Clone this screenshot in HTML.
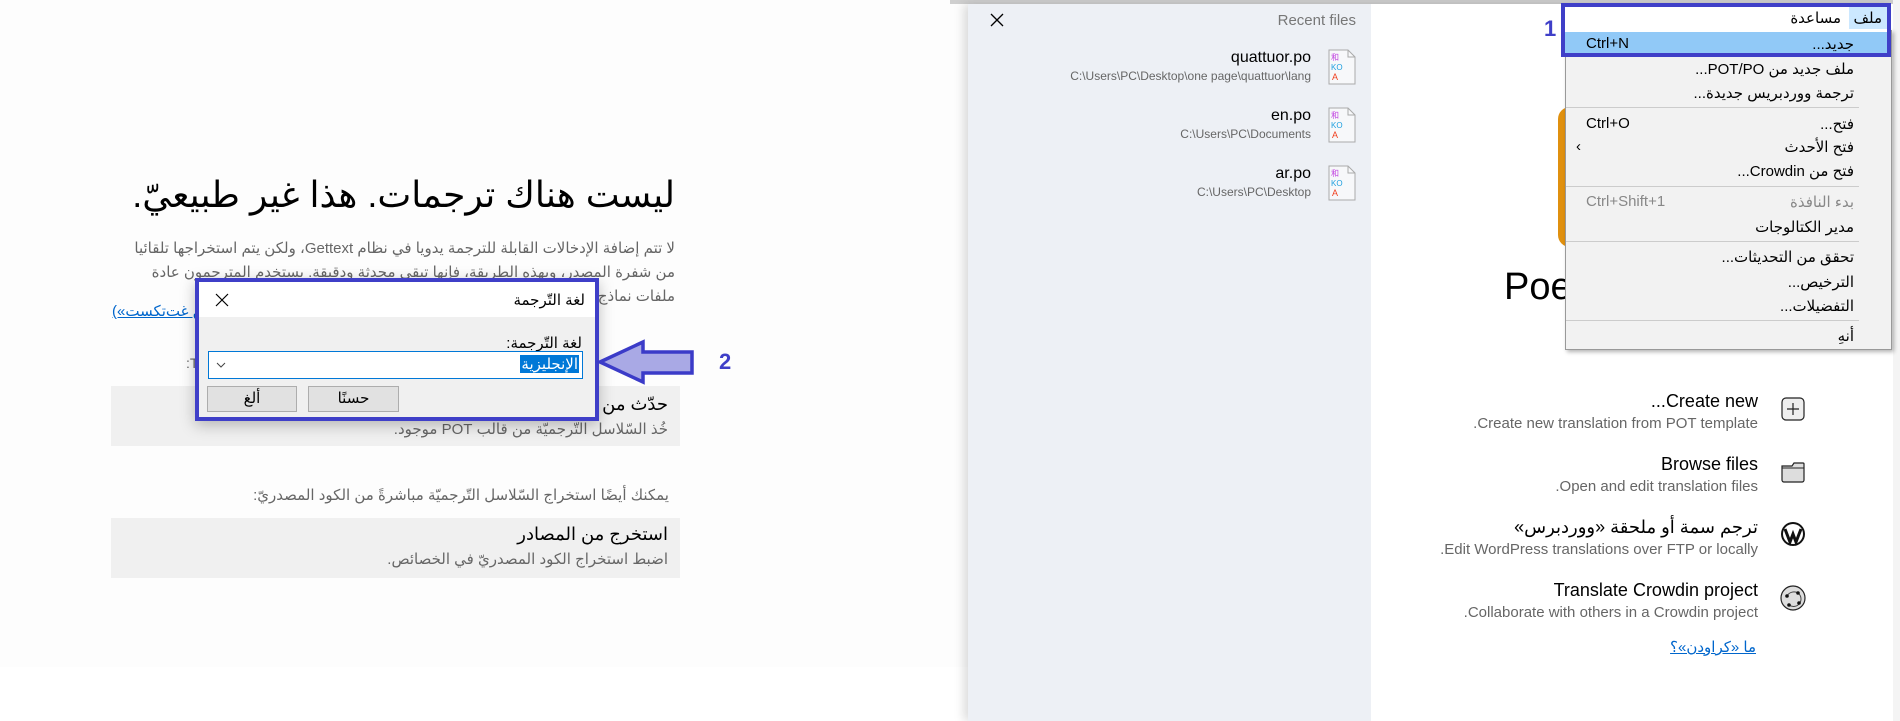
<!DOCTYPE html>
<html><head><meta charset="utf-8">
<style>
*{margin:0;padding:0;box-sizing:border-box}
body{width:1900px;height:721px;position:relative;overflow:hidden;background:#fff;font-family:"Liberation Sans","DejaVu Sans",sans-serif;color:#000}
.a{position:absolute;white-space:nowrap}
.r{direction:rtl}
</style></head><body>
<!-- left panel -->
<div class="a" style="left:0;top:0;width:968px;height:667px;background:#fdfdfd"></div>
<div class="a r" style="right:1225px;top:174px;font-size:36px;">ليست هناك ترجمات. هذا غير طبيعيّ.</div>
<div class="a r" style="right:1225px;top:237px;font-size:15px;color:#666;line-height:24px;text-align:right">لا تتم إضافة الإدخالات القابلة للترجمة يدويا في نظام Gettext، ولكن يتم استخراجها تلقائيا<br>من شفرة المصدر، وبهذه الطريقة، فإنها تبقى محدثة ودقيقة. يستخدم المترجمون عادة<br>ملفات نماذج POT</div>
<div class="a r" style="left:112px;top:302px;font-size:15px;color:#0066cc;text-decoration:underline">(«عن غت‌تكست»)</div>
<div class="a" style="left:186px;top:355px;font-size:14px;color:#666">:T</div>
<div class="a" style="left:111px;top:386px;width:569px;height:60px;background:#f0f0f0"></div>
<div class="a r" style="right:1232px;top:394px;font-size:18px">حدّث من قالب POT</div>
<div class="a r" style="right:1232px;top:420px;font-size:15px;color:#666">خُذ السّلاسل التّرجميّة من قالب POT موجود.</div>
<div class="a r" style="right:1231px;top:486px;font-size:15px;color:#666">يمكنك أيضًا استخراج السّلاسل التّرجميّة مباشرةً من الكود المصدريّ:</div>
<div class="a" style="left:111px;top:518px;width:569px;height:60px;background:#f0f0f0"></div>
<div class="a r" style="right:1232px;top:524px;font-size:18px">استخرج من المصادر</div>
<div class="a r" style="right:1232px;top:550px;font-size:15px;color:#666">اضبط استخراج الكود المصدريّ في الخصائص.</div>

<!-- dialog -->
<div class="a" style="left:195px;top:278px;width:404px;height:143px;border:4px solid #3f3fc8;background:#f0f0f0;box-shadow:0 4px 14px rgba(0,0,0,.25)">
  <div class="a" style="left:0;top:0;width:396px;height:35px;background:#fff"></div>
  <svg class="a" style="left:16px;top:11px" width="14" height="14"><path d="M1 1L13 13M13 1L1 13" stroke="#000" stroke-width="1.2"/></svg>
  <div class="a r" style="right:10px;top:9px;font-size:15px">لغة التّرجمة</div>
  <div class="a r" style="right:13px;top:52px;font-size:15px">لغة التّرجمة:</div>
  <div class="a" style="left:9px;top:69px;width:375px;height:28px;border:1px solid #0078d7;background:#fff"></div>
  <div class="a r" style="right:16px;top:73px;font-size:15px;background:#0078d7;color:#fff;padding:0 1px">الإنجليزية</div>
  <svg class="a" style="left:17px;top:80px" width="10" height="6"><path d="M1 1L5 5L9 1" stroke="#444" fill="none"/></svg>
  <div class="a" style="left:8px;top:104px;width:90px;height:26px;background:#e1e1e1;border:1px solid #adadad;font-size:15px;text-align:center;line-height:24px">ألغ</div>
  <div class="a" style="left:109px;top:104px;width:91px;height:26px;background:#e1e1e1;border:1px solid #adadad;font-size:15px;text-align:center;line-height:24px">حسنًا</div>
</div>
<!-- arrow 2 -->
<svg class="a" style="left:595px;top:336px" width="105" height="52"><path d="M5 26L48 6V16H97V37H48V46Z" fill="rgba(100,100,210,.55)" stroke="#3b3bc8" stroke-width="3.5" stroke-linejoin="miter"/></svg>
<div class="a" style="left:719px;top:349px;font-size:22px;font-weight:bold;color:#3f3fc8">2</div>

<!-- window -->
<div class="a" style="left:950px;top:0;width:950px;height:4px;background:#cfcfcf"></div>
<div class="a" style="left:968px;top:4px;width:925px;height:717px;background:#fff;box-shadow:-4px 0 10px rgba(0,0,0,.15)"></div>
<div class="a" style="left:1893px;top:0;width:7px;height:721px;background:#f4f4f4"></div>
<div class="a" style="left:968px;top:4px;width:403px;height:717px;background:#edf0f5"></div>
<svg class="a" style="left:990px;top:13px" width="14" height="14"><path d="M1 1L13 13M13 1L1 13" stroke="#000" stroke-width="1.3"/></svg>
<div class="a" style="right:544px;top:12px;font-size:15px;color:#777">Recent files</div>

<div class="a" style="right:589px;top:49px;font-size:16px">quattuor.po</div>
<div class="a" style="right:589px;top:69px;font-size:12px;color:#666">C:\Users\PC\Desktop\one page\quattuor\lang</div>
<div class="a" style="right:589px;top:107px;font-size:16px">en.po</div>
<div class="a" style="right:589px;top:127px;font-size:12px;color:#666">C:\Users\PC\Documents</div>
<div class="a" style="right:589px;top:165px;font-size:16px">ar.po</div>
<div class="a" style="right:589px;top:185px;font-size:12px;color:#666">C:\Users\PC\Desktop</div>
<svg class="a" style="left:1328px;top:49px" width="28" height="36"><path d="M1 1H20L27 8V35H1Z" fill="#f7f8fa" stroke="#aaa"/><path d="M20 1V8H27" fill="none" stroke="#aaa"/><text x="3" y="11" font-size="8" fill="#c040e0">和</text><text x="3" y="21" font-size="8" fill="#20a0e0">KO</text><text x="4" y="31" font-size="9" fill="#f04020">A</text></svg>
<svg class="a" style="left:1328px;top:107px" width="28" height="36"><path d="M1 1H20L27 8V35H1Z" fill="#f7f8fa" stroke="#aaa"/><path d="M20 1V8H27" fill="none" stroke="#aaa"/><text x="3" y="11" font-size="8" fill="#c040e0">和</text><text x="3" y="21" font-size="8" fill="#20a0e0">KO</text><text x="4" y="31" font-size="9" fill="#f04020">A</text></svg>
<svg class="a" style="left:1328px;top:165px" width="28" height="36"><path d="M1 1H20L27 8V35H1Z" fill="#f7f8fa" stroke="#aaa"/><path d="M20 1V8H27" fill="none" stroke="#aaa"/><text x="3" y="11" font-size="8" fill="#c040e0">和</text><text x="3" y="21" font-size="8" fill="#20a0e0">KO</text><text x="4" y="31" font-size="9" fill="#f04020">A</text></svg>

<!-- main -->
<div class="a" style="left:1558px;top:107px;width:60px;height:140px;background:#e0900f;border-radius:12px"></div>
<div class="a" style="left:1504px;top:266px;font-size:38px">Poedit</div>

<div class="a r" style="right:142px;top:391px;font-size:18px">Create new...</div>
<div class="a r" style="right:142px;top:415px;font-size:15px;color:#666">Create new translation from POT template.</div>
<div class="a r" style="right:142px;top:454px;font-size:18px">Browse files</div>
<div class="a r" style="right:142px;top:478px;font-size:15px;color:#666">Open and edit translation files.</div>
<div class="a r" style="right:142px;top:517px;font-size:18px">ترجم سمة أو ملحقة «ووردبرس»</div>
<div class="a r" style="right:142px;top:541px;font-size:15px;color:#666">Edit WordPress translations over FTP or locally.</div>
<div class="a r" style="right:142px;top:580px;font-size:18px">Translate Crowdin project</div>
<div class="a r" style="right:142px;top:604px;font-size:15px;color:#666">Collaborate with others in a Crowdin project.</div>
<div class="a r" style="right:144px;top:638px;font-size:15px;color:#0066cc;text-decoration:underline">ما «كراودن»؟</div>
<svg class="a" style="left:1781px;top:397px" width="24" height="24"><rect x="1" y="1" width="22" height="22" rx="4" fill="#eee" stroke="#222" stroke-width="1.2"/><path d="M12 6V18M6 12H18" stroke="#222" stroke-width="1.2"/></svg>
<svg class="a" style="left:1781px;top:460px" width="24" height="24"><path d="M1 6H11L13 3H22A1 1 0 0 1 23 4V20A2 2 0 0 1 21 22H3A2 2 0 0 1 1 20Z" fill="#ddd" stroke="#222" stroke-width="1.2"/><path d="M1 8H23" stroke="#222" stroke-width="1"/></svg>
<svg class="a" style="left:1780px;top:521px" width="26" height="26"><circle cx="13" cy="13" r="12" fill="#111"/><circle cx="13" cy="13" r="10" fill="#fff"/><path d="M5 8L10 21L13 13L16 21L21 8" stroke="#111" stroke-width="3" fill="none"/></svg>
<svg class="a" style="left:1780px;top:585px" width="26" height="26"><circle cx="13" cy="13" r="12" fill="#ddd" stroke="#222" stroke-width="1.2"/><path d="M7 11A8 8 0 0 1 18 8M18 8A7 7 0 0 1 9 20" stroke="#444" fill="none"/><circle cx="7" cy="11" r="1.8" fill="#111"/><circle cx="18" cy="8" r="1.8" fill="#111"/><circle cx="9" cy="20" r="1.8" fill="#111"/><circle cx="19" cy="18" r="1.8" fill="#111"/></svg>

<!-- menu -->
<div class="a" style="left:1565px;top:30px;width:327px;height:320px;background:#f2f2f2;border:1px solid #999;box-shadow:2px 2px 4px rgba(0,0,0,.3)"></div>
<div class="a" style="left:1561px;top:3px;width:330px;height:54px;border:4px solid #3f3fc8;background:#fff"></div>
<div class="a" style="left:1849px;top:7px;width:38px;height:22px;background:#cce8ff"></div>
<div class="a" style="left:1565px;top:32px;width:322px;height:21px;background:#91c9f7"></div>
<div class="a r" style="right:18px;top:9px;font-size:15px">ملف</div>
<div class="a r" style="right:59px;top:9px;font-size:15px">مساعدة</div>
<div class="a" style="left:1544px;top:16px;font-size:22px;font-weight:bold;color:#3f3fc8">1</div>
<div style="position:absolute;right:46px;top:0;font-size:15px;direction:rtl;text-align:right">
<div class="a" style="right:0;top:35px">جديد...</div>
<div class="a" style="right:0;top:60px">ملف جديد من POT/PO...</div>
<div class="a" style="right:0;top:84px">ترجمة ووردبريس جديدة...</div>
<div class="a" style="right:0;top:115px">فتح...</div>
<div class="a" style="right:0;top:138px">فتح الأحدث</div>
<div class="a" style="right:0;top:162px">فتح من Crowdin...</div>
<div class="a" style="right:0;top:193px;color:#888">بدء النافذة</div>
<div class="a" style="right:0;top:218px">مدير الكتالوجات</div>
<div class="a" style="right:0;top:248px">تحقق من التحديثات...</div>
<div class="a" style="right:0;top:273px">الترخيص...</div>
<div class="a" style="right:0;top:297px">التفضيلات...</div>
<div class="a" style="right:0;top:327px">أنهِ</div>
</div>
<div class="a" style="left:1586px;top:35px;font-size:15px">Ctrl+N</div>
<div class="a" style="left:1586px;top:115px;font-size:15px">Ctrl+O</div>
<div class="a" style="left:1576px;top:138px;font-size:15px">‹</div>
<div class="a" style="left:1586px;top:193px;font-size:15px;color:#888">Ctrl+Shift+1</div>
<div class="a" style="left:1566px;top:107px;width:293px;height:1px;background:#ccc"></div>
<div class="a" style="left:1566px;top:186px;width:293px;height:1px;background:#ccc"></div>
<div class="a" style="left:1566px;top:241px;width:293px;height:1px;background:#ccc"></div>
<div class="a" style="left:1566px;top:320px;width:293px;height:1px;background:#ccc"></div>
</body></html>
